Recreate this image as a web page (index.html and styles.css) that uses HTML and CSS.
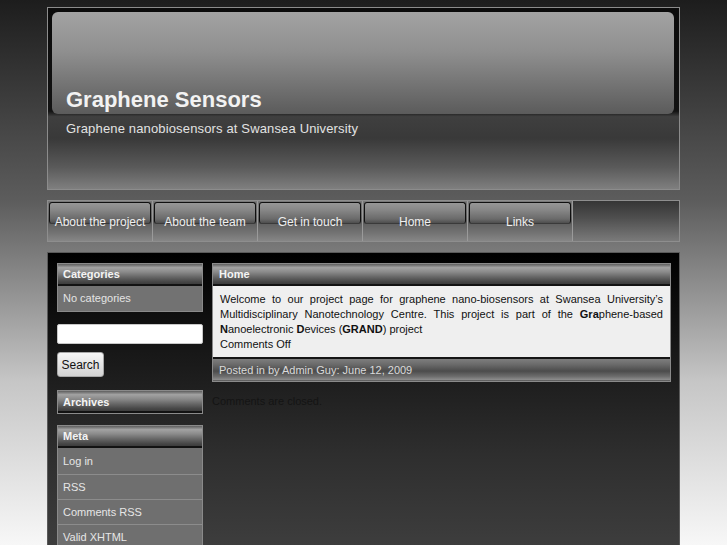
FILE: index.html
```html
<!DOCTYPE html>
<html lang="en">
<head>
<meta charset="utf-8">
<title>Graphene Sensors</title>
<link rel="stylesheet" href="styles.css">
</head>
<body>
<div class="wrap">
  <header class="header">
    <div class="header-panel">
      <h1 class="site-title">Graphene Sensors</h1>
    </div>
    <p class="site-desc">Graphene nanobiosensors at Swansea University</p>
  </header>

  <nav class="nav">
    <a class="tab" href="#"><span class="tab-label">About the project</span></a>
    <a class="tab" href="#"><span class="tab-label">About the team</span></a>
    <a class="tab" href="#"><span class="tab-label">Get in touch</span></a>
    <a class="tab" href="#"><span class="tab-label">Home</span></a>
    <a class="tab" href="#"><span class="tab-label">Links</span></a>
    <span class="nav-fill"></span>
  </nav>

  <div class="content">
    <aside class="sidebar">
      <section class="widget">
        <h2 class="widget-title">Categories</h2>
        <div class="widget-body">No categories</div>
      </section>

      <form class="search">
        <input class="search-input" type="text">
        <button class="search-btn" type="button">Search</button>
      </form>

      <section class="widget">
        <h2 class="widget-title widget-title-archives">Archives</h2>
      </section>

      <section class="widget">
        <h2 class="widget-title">Meta</h2>
        <ul class="widget-list">
          <li>Log in</li>
          <li>RSS</li>
          <li>Comments RSS</li>
          <li>Valid XHTML</li>
        </ul>
      </section>
    </aside>

    <main class="main">
      <article class="post">
        <h2 class="post-title">Home</h2>
        <div class="post-body">
          <p class="post-text">Welcome to our project page for graphene nano-biosensors at Swansea University’s Multidisciplinary Nanotechnology Centre. This project is part of the <b>Gra</b>phene-based <b>N</b>anoelectronic <b>D</b>evices (<b>GRAND</b>) project</p>
          <p class="post-comments">Comments Off</p>
        </div>
        <div class="post-meta">Posted in by Admin Guy: June 12, 2009</div>
      </article>
      <p class="closed">Comments are closed.</p>
    </main>
  </div>
</div>
</body>
</html>
```

FILE: styles.css
```css
html {
  background: #f6f6f6 linear-gradient(to bottom, #1d1d1d 0%, #5d5d5d 37%, #c6c6c6 70%, #f7f7f7 100%) no-repeat;
  background-size: 100% 100vh;
}

body {
  margin: 0;
  font-family: "Liberation Sans", Arial, sans-serif;
  font-size: 11px;
  color: #111;
}

.wrap {
  width: 633px;
  margin: 0 auto;
  padding-top: 7px;
}

/* Header */
.header {
  height: 183px;
  box-sizing: border-box;
  border: 1px solid #8c8c8c;
  padding: 4px 5px 0 4px;
  background: linear-gradient(to bottom, #0b0b0b 0%, #121212 57%, #3f3f3f 60%, #393939 72%, #5a5a5a 88%, #7f7f7f 100%);
}

.header-panel {
  height: 102px;
  border-radius: 6px;
  background: linear-gradient(to bottom, #a3a3a3 0%, #8e8e8e 40%, #6c6c6c 80%, #5b5b5b 100%);
  display: flex;
  align-items: flex-end;
  padding: 0 14px 1px;
  box-sizing: border-box;
}

.site-title {
  margin: 0;
  font-size: 22px;
  line-height: 26px;
  font-weight: bold;
  color: #f2f2f2;
}

.site-desc {
  margin: 7px 0 0 14px;
  font-size: 13px;
  letter-spacing: 0.15px;
  line-height: 16px;
  color: #e2e2e2;
}

/* Navigation */
.nav {
  margin-top: 10px;
  height: 40px;
  border: 1px solid #8e8e8e;
  display: flex;
  background: #6a6a6a;
}

.tab {
  position: relative;
  width: 105px;
  border-right: 1px solid #9a9a9a;
  display: flex;
  align-items: center;
  justify-content: center;
  padding-top: 2px;
  box-sizing: border-box;
  color: #efefef;
  text-decoration: none;
  font-size: 12px;
  background: linear-gradient(to bottom, #7a7a7a 0%, #5c5c5c 50%, #5f5f5f 55%, #737373 80%, #868686 100%);
}

.tab::before {
  content: "";
  position: absolute;
  top: 1px;
  left: 1px;
  right: 1px;
  height: 20px;
  border: 1px solid #101010;
  border-bottom: none;
  border-radius: 3px 3px 2px 2px;
  background: linear-gradient(to bottom, #979797 0%, #878787 35%, #6a6a6a 80%, #4e4e4e 100%);
  box-shadow: 0 1px 0 #3a3a3a;
}

.tab-label {
  position: relative;
}

.nav-fill {
  flex: 1;
  background: linear-gradient(to bottom, #353535 0%, #4d4d4d 40%, #7a7a7a 100%);
}

/* Content */
.content {
  margin-top: 10px;
  min-height: 300px;
  border: 1px solid #5a5a5a;
  border-bottom: none;
  background: linear-gradient(to bottom, #000 0%, #161616 30%, #2e2e2e 65%, #404040 100%);
  display: flex;
  gap: 9px;
  padding: 10px 8px 0 9px;
}

.sidebar {
  width: 146px;
  flex: none;
}

.main {
  flex: 1;
}

.widget {
  border: 1px solid #8a8a8a;
  margin-bottom: 11px;
}

.widget-title,
.post-title {
  margin: 0;
  height: 20px;
  padding-left: 5px;
  font-size: 11px;
  line-height: 21px;
  font-weight: bold;
  color: #f4f4f4;
  border-bottom: 2px solid #121212;
  background: linear-gradient(to bottom, #5e5e5e 0%, #a2a2a2 18%, #8a8a8a 40%, #666 65%, #474747 88%, #3c3c3c 100%);
}

.widget-title-archives {
  line-height: 22px;
}

.widget-body {
  height: 25px;
  line-height: 24px;
  padding-left: 5px;
  color: #e4e4e4;
  background: #727272;
  font-size: 11px;
}

.widget-list {
  list-style: none;
  margin: 0;
  padding: 0;
  background: #6f6f6f;
}

.widget-list li {
  height: 24px;
  line-height: 25px;
  padding-left: 5px;
  color: #e6e6e6;
  border-top: 1px solid #8c8c8c;
}

.widget-list li:first-child {
  border-top: none;
  height: 26px;
  line-height: 27px;
}

.search {
  margin: 0 0 13px;
  padding-top: 1px;
}

.search-input {
  display: block;
  width: 146px;
  height: 20px;
  box-sizing: border-box;
  border: 1px solid #c8c8c8;
  border-radius: 2px;
  background: #fff;
  margin: 0;
}

.search-btn {
  display: block;
  margin-top: 8px;
  width: 47px;
  height: 25px;
  border: 1px solid #a8a8a8;
  border-radius: 3px;
  background: linear-gradient(to bottom, #f6f6f6, #d2d2d2);
  font-family: "Liberation Sans", Arial, sans-serif;
  font-size: 12px;
  color: #111;
  padding: 0;
}

/* Post */
.post {
  border: 1px solid #8a8a8a;
}

.post-title {
  padding-left: 6px;
}

.post-body {
  background: #efefef;
  padding: 6px 7px 5px;
  line-height: 15px;
}

.post-text {
  margin: 0;
  text-align: justify;
}

.post-comments {
  margin: 0;
}

.post-meta {
  height: 22px;
  line-height: 22px;
  padding-left: 6px;
  color: #dadada;
  border-top: 2px solid #151515;
  background: linear-gradient(to bottom, #7e7e7e 0%, #6a6a6a 25%, #4c4c4c 55%, #6e6e6e 80%, #8e8e8e 95%, #3a3a3a 100%);
}

.closed {
  margin: 12px 0 0;
  color: #141414;
  line-height: 15px;
}
```
